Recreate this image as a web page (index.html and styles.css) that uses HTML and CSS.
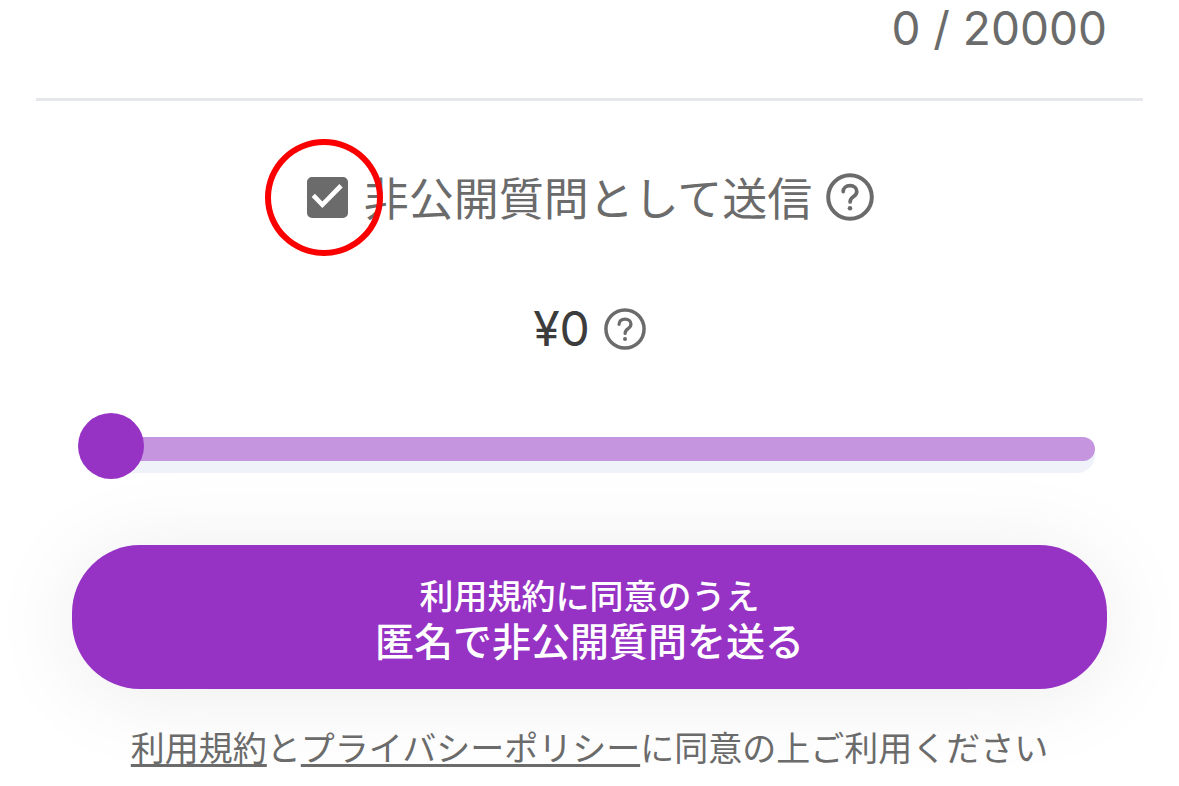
FILE: index.html
```html
<!DOCTYPE html>
<html lang="ja">
<head>
    <meta charset="UTF-8">
    <meta name="viewport" content="width=device-width, initial-scale=1.0">
    <title>質問を送る</title>
    <link rel="stylesheet" href="styles.css">
</head>
<body>
    <form class="question-form">
        <div class="counter">0 / 20000</div>
        <div class="private-row">
            <label class="private-label" for="private">
                <span class="check-wrap">
                    <input type="checkbox" id="private" class="checkbox" checked>
                    <span class="marker"></span>
                </span>
                非公開質問として送信
            </label>
            <button type="button" class="help" aria-label="非公開質問について">
                <svg viewBox="0 0 48 48" fill="none" stroke="currentColor" stroke-linecap="round">
                    <circle cx="24" cy="24" r="21.8" stroke-width="4"/>
                    <path d="M17.2 18.6C17.2 15.2 20 12.6 24 12.6S30.8 15.2 30.8 18.4C30.8 20.8 29.8 22 27.6 23.5C25 25.2 24.1 26.4 24.1 29" stroke-width="3.7"/>
                    <circle cx="24" cy="35.3" r="2.3" fill="currentColor" stroke="none"/>
                </svg>
            </button>
        </div>
        <div class="price-row">
            <label class="price" for="amount">¥0</label>
            <button type="button" class="help help-small" aria-label="金額について">
                <svg viewBox="0 0 48 48" fill="none" stroke="currentColor" stroke-linecap="round">
                    <circle cx="24" cy="24" r="21.8" stroke-width="4"/>
                    <path d="M17.2 18.6C17.2 15.2 20 12.6 24 12.6S30.8 15.2 30.8 18.4C30.8 20.8 29.8 22 27.6 23.5C25 25.2 24.1 26.4 24.1 29" stroke-width="3.7"/>
                    <circle cx="24" cy="35.3" r="2.3" fill="currentColor" stroke="none"/>
                </svg>
            </button>
        </div>
        <div class="slider-row">
            <input type="range" id="amount" class="slider" min="0" max="10000" value="0">
        </div>
        <div class="submit-row">
            <button type="submit" class="submit">
                <span class="submit-note">利用規約に同意のうえ</span>
                <span class="submit-main">匿名で非公開質問を送る</span>
            </button>
        </div>
        <p class="terms"><a href="#terms">利用規約</a>と<a href="#privacy">プライバシーポリシー</a>に同意の上ご利用ください</p>
    </form>
</body>
</html>
```
FILE: styles.css
```css
* {
    box-sizing: border-box;
}
body {
    margin: 0;
    background: #fff;
    color: #6b6b6b;
    font-family: Inter, "Noto Sans CJK JP", sans-serif;
}
.question-form {
    padding: 0 36px;
}
.counter {
    padding: 0 36px 42px;
    border-bottom: 3px solid #e5e7eb;
    font-size: 46px;
    line-height: 56px;
    text-align: right;
}
.private-row {
    display: flex;
    justify-content: center;
    align-items: center;
    gap: 14px;
    margin-top: 60px;
}
.private-label {
    display: flex;
    align-items: center;
    gap: 16px;
    padding-left: 2px;
    font-family: "Noto Sans CJK JP", sans-serif;
    font-size: 45px;
    line-height: 72px;
    white-space: nowrap;
}
.check-wrap {
    position: relative;
    display: flex;
}
.checkbox {
    appearance: none;
    display: grid;
    width: 41px;
    height: 41px;
    margin: 0;
    border: 2px solid #6b6b6b;
    border-radius: 5px;
}
.checkbox:checked {
    background: #6b6b6b;
}
.checkbox:checked::before {
    content: "";
    background: #fff;
    clip-path: polygon(8% 50%, 17% 41%, 37% 62%, 83% 15%, 92% 24%, 37% 80%);
}
/* red ring around the checkbox */
.marker {
    position: absolute;
    top: -38px;
    left: -42px;
    width: 118px;
    height: 117px;
    border: 6px solid #fa0000;
    border-radius: 50%;
    pointer-events: none;
}
.help {
    display: flex;
    width: 48px;
    height: 48px;
    padding: 0;
    border: none;
    background: none;
    color: #6b6b6b;
}
.help svg {
    width: 100%;
    height: 100%;
}
.help-small {
    width: 42px;
    height: 42px;
}
.price-row {
    display: flex;
    justify-content: center;
    align-items: center;
    gap: 14px;
    margin-top: 68px;
}
.price {
    color: #3c3c3c;
    font-size: 48px;
    line-height: 56px;
}
.slider-row {
    padding: 0 48px 0 42px;
    margin-top: 80px;
}
.slider {
    appearance: none;
    display: block;
    width: 100%;
    height: 36px;
    margin: 0;
    border-radius: 18px;
    background: linear-gradient(#eff3f9, #eff3f9) right / calc(100% - 33px) 100% no-repeat;
}
.slider::-webkit-slider-runnable-track {
    align-self: flex-start;
    height: 24px;
    border-radius: 12px;
    background: linear-gradient(#c595df, #c595df) right / calc(100% - 33px) 100% no-repeat;
}
.slider::-webkit-slider-thumb {
    appearance: none;
    width: 66px;
    height: 66px;
    margin-top: -24px;
    border-radius: 50%;
    background: #9632c4;
}
.submit-row {
    padding: 0 36px;
    margin-top: 72px;
}
.submit {
    display: flex;
    flex-direction: column;
    align-items: center;
    justify-content: center;
    width: 100%;
    padding: 28px;
    border: none;
    border-radius: 68px;
    background: #9632c4;
    box-shadow: 0 6px 90px rgba(0, 0, 0, 0.08);
    color: #fff;
    font-family: "Noto Sans CJK JP", sans-serif;
    font-weight: 500;
}
.submit-note {
    font-size: 34px;
    line-height: 44px;
}
.submit-main {
    font-size: 39px;
    line-height: 44px;
}
.terms {
    margin: 34px 0 0;
    font-family: "Noto Sans CJK JP", sans-serif;
    font-size: 34px;
    line-height: 48px;
    text-align: center;
    white-space: nowrap;
}
.terms a {
    color: inherit;
    text-decoration: underline;
    text-decoration-thickness: 3px;
    text-underline-offset: 3px;
    text-decoration-skip-ink: none;
}
```
